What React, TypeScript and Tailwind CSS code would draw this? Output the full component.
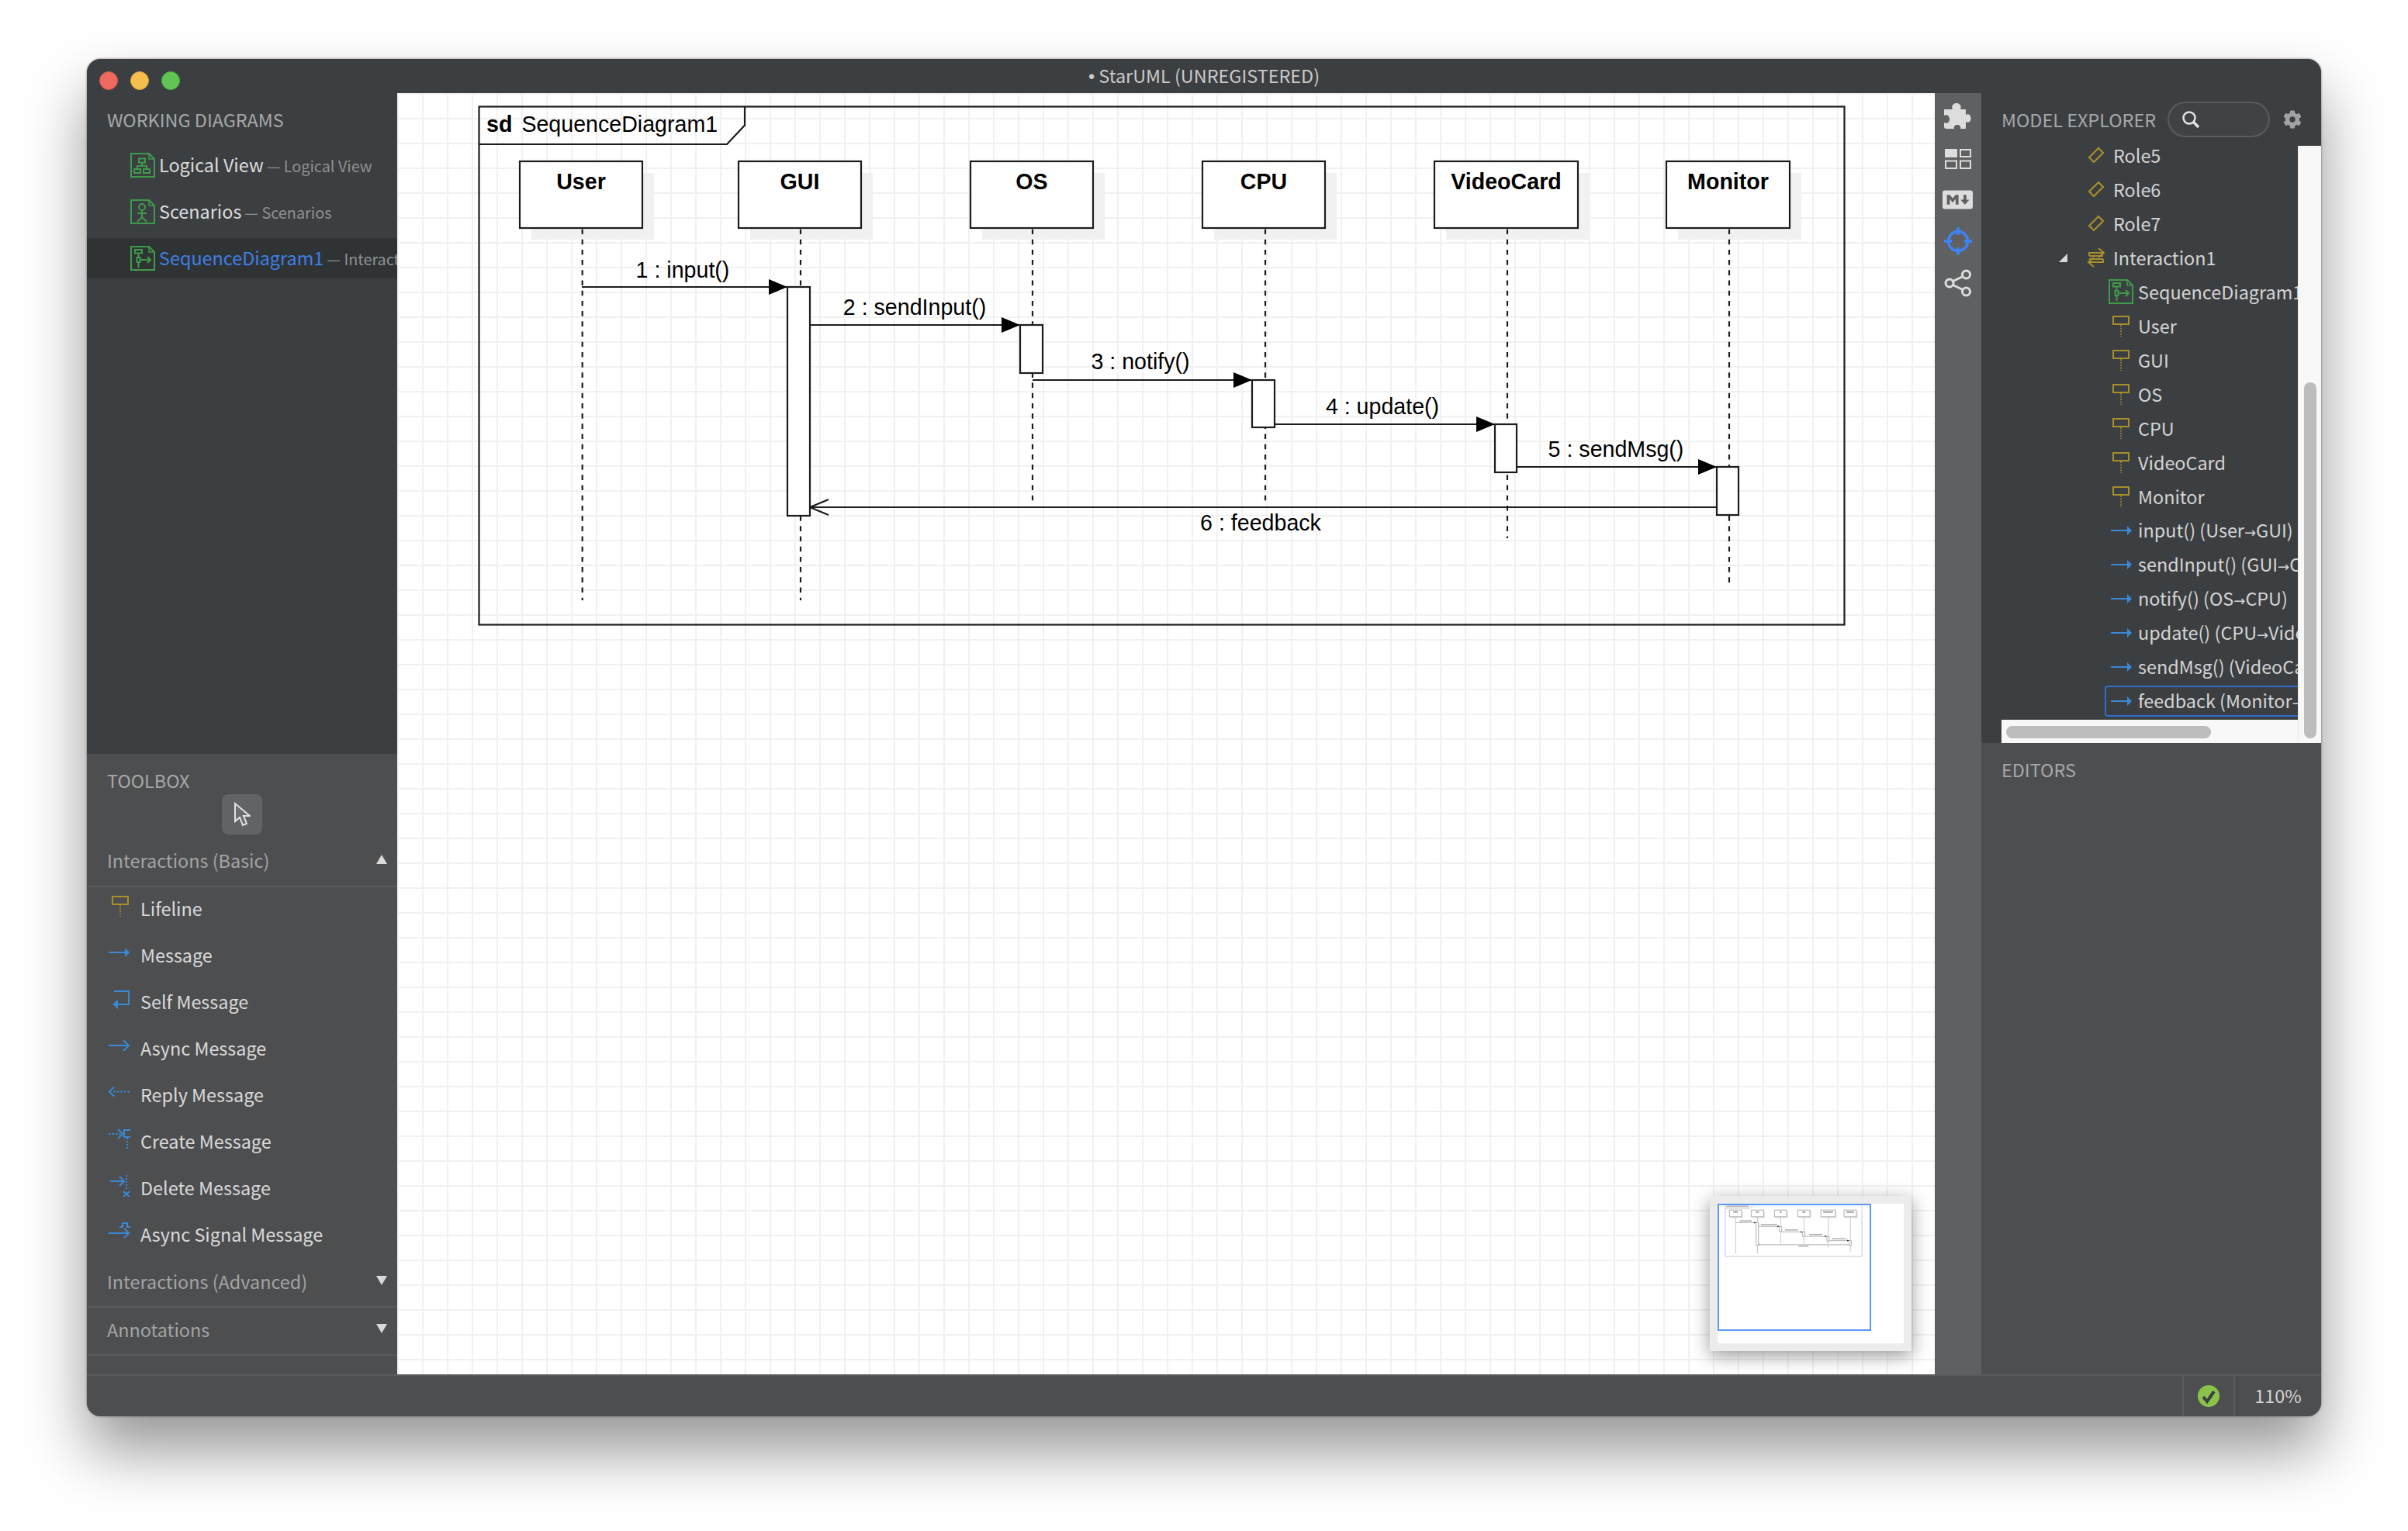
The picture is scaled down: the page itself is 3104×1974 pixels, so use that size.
import { FaCog, FaMarkdown } from 'react-icons/fa';

const GREEN = '#3f9a4c';
const GOLD = '#a78f2b';
const BLUE = '#3b88d4';

// --- small drawings ---------------------------------------------------------

function DiagramIcon({ kind }: { kind: 'logical' | 'scenario' | 'sequence' }) {
  return (
    <svg width="32" height="32" viewBox="0 0 32 32" fill="none" stroke={GREEN} strokeWidth="2" className="shrink-0">
      <path d="M1 1H24L31 8V31H1Z" />
      <path d="M24 1V8H31" strokeWidth="1.5" />
      {kind === 'logical' && (
        <>
          <rect x="11" y="7.5" width="8" height="5" />
          <rect x="5" y="21" width="8" height="5" />
          <rect x="17" y="21" width="8" height="5" />
          <path d="M15 12.5V17M9 21V17H21V21" />
        </>
      )}
      {kind === 'scenario' && (
        <>
          <circle cx="15" cy="10" r="4" />
          <path d="M15 14V23M9 18H21M15 23L9 29M15 23L21 29" />
        </>
      )}
      {kind === 'sequence' && (
        <>
          <rect x="6" y="5" width="9" height="4.5" />
          <rect x="8.5" y="15" width="4" height="6" />
          <path d="M10.5 9.5V15M10.5 21V28M12.5 18H26M22 14L26 18L22 22" />
        </>
      )}
    </svg>
  );
}

function LifelineIcon() {
  return (
    <svg width="22" height="27" viewBox="0 0 22 27" fill="none" stroke={GOLD} className="shrink-0">
      <rect x="1" y="1" width="20" height="10" strokeWidth="2" />
      <path d="M11 12V27" strokeWidth="1.5" strokeDasharray="2 1.5" />
    </svg>
  );
}

function ArrowIcon() {
  return (
    <svg width="27" height="12" viewBox="0 0 27 12" className="shrink-0">
      <path d="M0 6H22" stroke={BLUE} strokeWidth="2" />
      <path d="M21 0L27 6L21 12Z" fill={BLUE} />
    </svg>
  );
}

function ToolIcon({ name }: { name: string }) {
  return (
    <svg width="29" height="30" viewBox="0 0 29 30" fill="none" stroke={BLUE} strokeWidth="2" className="mb-[8px] shrink-0">
      {name === 'Lifeline' && (
        <g stroke={GOLD}>
          <rect x="5" y="2" width="20" height="10" />
          <path d="M15 13V28" strokeWidth="1.5" strokeDasharray="2 1.5" />
        </g>
      )}
      {name === 'Message' && (
        <>
          <path d="M0 14H22" />
          <path d="M21 8L27 14L21 20Z" fill={BLUE} stroke="none" />
        </>
      )}
      {name === 'Self Message' && (
        <>
          <path d="M7 4H26V21H10" />
          <path d="M12 15L5 21L12 27Z" fill={BLUE} stroke="none" />
        </>
      )}
      {name === 'Async Message' && <path d="M0 14H26M19 7L26 14L19 21" />}
      {name === 'Reply Message' && <path d="M27 13.5H5" strokeDasharray="2.5 2" />}
      {name === 'Reply Message' && <path d="M7 7.5L1 13.5L7 19.5" />}
      {name === 'Create Message' && (
        <>
          <path d="M0 8H15" strokeDasharray="2.5 2" />
          <path d="M12 2L18 8L12 14" />
          <path d="M19 3H28M20 3V12H28" />
          <path d="M24 13V28" strokeDasharray="2 2" />
        </>
      )}
      {name === 'Delete Message' && (
        <>
          <path d="M2 9H20M14 3L20 9L14 15" />
          <path d="M23 1V20" strokeDasharray="2 2" />
          <path d="M19 22L27 29M27 22L19 29" />
        </>
      )}
      {name === 'Async Signal Message' && (
        <>
          <path d="M0 16H26M20 10L26 16L20 22" />
          <path d="M14 8H18V3H24V8H28" />
        </>
      )}
    </svg>
  );
}

function Caret({ up }: { up?: boolean }) {
  return (
    <svg width="14" height="12" viewBox="0 0 14 12" className="mb-[6px] shrink-0" fill="#d9d9d9">
      <path d={up ? 'M7 0L14 12H0Z' : 'M0 0H14L7 12Z'} />
    </svg>
  );
}

// --- the sequence diagram, in screen coordinates ----------------------------

const lifelines = [
  { name: 'User', x1: 670, x2: 828, cx: 750.7, end: 774 },
  { name: 'GUI', x1: 952, x2: 1110, cx: 1032, end: 774 },
  { name: 'OS', x1: 1251, x2: 1409, cx: 1331, end: 647 },
  { name: 'CPU', x1: 1550, x2: 1708, cx: 1631, end: 647 },
  { name: 'VideoCard', x1: 1849, x2: 2034, cx: 1943, end: 694 },
  { name: 'Monitor', x1: 2148, x2: 2307, cx: 2229, end: 752 },
];

const activations = [
  { x: 1015, w: 29, y1: 370, y2: 665 },
  { x: 1315, w: 29, y1: 419, y2: 481 },
  { x: 1614, w: 29, y1: 490, y2: 551 },
  { x: 1927, w: 28, y1: 547, y2: 609 },
  { x: 2213, w: 28, y1: 602, y2: 664 },
];

const messages = [
  { label: '1 : input()', from: 750, to: 1015, y: 370, tx: 880, ty: 358 },
  { label: '2 : sendInput()', from: 1044, to: 1315, y: 419, tx: 1179, ty: 406 },
  { label: '3 : notify()', from: 1331, to: 1614, y: 490, tx: 1470, ty: 476 },
  { label: '4 : update()', from: 1643, to: 1927, y: 547, tx: 1782, ty: 534 },
  { label: '5 : sendMsg()', from: 1955, to: 2213, y: 602, tx: 2083, ty: 589 },
];

function Diagram({ mini }: { mini?: boolean }) {
  const ink = mini ? '#bdbdbd' : '#1c1c1c';
  const line = mini ? 8 : 2.2;
  const boxLine = mini ? 12 : 2.2;
  return (
    <svg
      viewBox={mini ? '517 126 2400 1800' : '512 120 1982 1652'}
      className="absolute top-0 left-0 h-full w-full font-['Liberation_Sans','Arial',sans-serif]"
      fill="none"
    >
      <rect x="617.5" y="137.5" width="1760" height="668" stroke={ink} strokeWidth={line} />
      <path d="M617.5 186H937L960 161.5V137.5" stroke={ink} strokeWidth={line} />
      {!mini && (
        <text x="627" y="170" fontSize="28.6" fill="#000" stroke="none">
          <tspan fontWeight="700">sd</tspan>
          <tspan dx="12">SequenceDiagram1</tspan>
        </text>
      )}
      {mini && <rect x="630" y="150" width="290" height="20" fill="#bbb" />}
      {lifelines.map((l) => (
        <g key={l.name}>
          <rect x={l.x1 + 15} y="223" width={l.x2 - l.x1} height="86" fill={mini ? '#ddd' : '#f1f1f1'} />
          <path d={`M${l.cx} 295.5V${l.end}`} stroke={ink} strokeWidth={line} strokeDasharray={mini ? undefined : '6.6 6.6'} />
          <rect x={l.x1} y="208" width={l.x2 - l.x1} height="86" fill="#fff" stroke={ink} strokeWidth={boxLine} />
          {mini ? (
            <rect x={(l.x1 + l.x2) / 2 - l.name.length * 7} y="224" width={l.name.length * 14} height="18" fill="#999" />
          ) : (
            <text x={(l.x1 + l.x2) / 2} y="244" textAnchor="middle" fontSize="28.6" fontWeight="700" fill="#000" stroke="none">
              {l.name}
            </text>
          )}
        </g>
      ))}
      {messages.map((m) => (
        <g key={m.label}>
          <path d={`M${m.from} ${m.y}H${m.to}`} stroke={ink} strokeWidth={boxLine} />
          <path d={`M${m.to - 24} ${m.y - 10}L${m.to} ${m.y}L${m.to - 24} ${m.y + 10}Z`} fill="#000" />
          {mini ? (
            <rect x={m.tx - m.label.length * 7} y={m.ty - 18} width={m.label.length * 14} height="14" fill="#aaa" />
          ) : (
            <text x={m.tx} y={m.ty} textAnchor="middle" fontSize="28.6" fill="#000" stroke="none">
              {m.label}
            </text>
          )}
        </g>
      ))}
      <path d="M2213 654H1044M1068 644L1044 654L1068 664" stroke={ink} strokeWidth={boxLine} />
      {mini ? (
        <rect x="1560" y="666" width="130" height="14" fill="#aaa" />
      ) : (
        <text x="1625" y="684" textAnchor="middle" fontSize="28.6" fill="#000" stroke="none">
          6 : feedback
        </text>
      )}
      {activations.map((a) => (
        <rect key={a.x} x={a.x} y={a.y1} width={a.w} height={a.y2 - a.y1} fill="#fff" stroke={ink} strokeWidth={boxLine} />
      ))}
    </svg>
  );
}

// --- panels -----------------------------------------------------------------

function WorkingDiagrams() {
  const rows = [
    { kind: 'logical' as const, name: 'Logical View', sub: 'Logical View' },
    { kind: 'scenario' as const, name: 'Scenarios', sub: 'Scenarios' },
    { kind: 'sequence' as const, name: 'SequenceDiagram1', sub: 'Interaction1', active: true },
  ];
  return (
    <div className="h-[852px] bg-[#3c3f41] pt-[20px]">
      <div className="pl-[26px] text-[23.4px] leading-[28px] text-[#a6a8a9]">WORKING DIAGRAMS</div>
      <div className="mt-[19px] flex flex-col gap-2">
        {rows.map((r) => (
          <div key={r.name} className={`flex h-[52px] items-center overflow-hidden whitespace-nowrap pl-[56px] ${r.active ? 'bg-[#303334]' : ''}`}>
            <DiagramIcon kind={r.kind} />
            <span className={`mb-[3px] ml-[5px] text-[23.4px] leading-[32px] ${r.active ? 'text-[#3d7fe6]' : 'text-[#dcdcdc]'}`}>{r.name}</span>
            <span className="mt-[1px] ml-[4px] text-[19.8px] leading-[32px] text-[#8f9192]">— {r.sub}</span>
          </div>
        ))}
      </div>
    </div>
  );
}

function SectionHeader({ label, up, className }: { label: string; up?: boolean; className: string }) {
  return (
    <div className={`flex items-center justify-between border-b-2 border-[#5a5b5d] pr-[13px] pl-[26px] ${className}`}>
      <span className="mb-[4px] text-[23.4px] leading-[28px] text-[#a3a4a5]">{label}</span>
      <Caret up={up} />
    </div>
  );
}

function Toolbox() {
  const tools = ['Lifeline', 'Message', 'Self Message', 'Async Message', 'Reply Message', 'Create Message', 'Delete Message', 'Async Signal Message'];
  return (
    <div className="h-[800px] bg-[#4d4e50] pt-[20px]">
      <div className="pl-[26px] text-[23.4px] leading-[28px] text-[#a6a8a9]">TOOLBOX</div>
      <div className="mt-[4px] flex justify-center">
        <div className="flex h-[52px] w-[52px] items-center justify-center rounded-lg bg-[#626365]">
          <svg width="22" height="32" viewBox="0 0 22 32" fill="#6d6e70" stroke="#e2e2e2" strokeWidth="2">
            <path d="M2 2V25L8 20L12 30L17 28L13 18H21Z" />
          </svg>
        </div>
      </div>
      <SectionHeader label="Interactions (Basic)" up className="h-[68px] pt-1" />
      <div className="-mt-px flex flex-col">
        {tools.map((t) => (
          <div key={t} className="flex h-[60px] items-center gap-[12px] pl-[28px]">
            <ToolIcon name={t} />
            <span className="mb-[4px] text-[23.4px] leading-[32px] text-[#d9d9d9]">{t}</span>
          </div>
        ))}
      </div>
      <SectionHeader label="Interactions (Advanced)" className="h-[63px]" />
      <SectionHeader label="Annotations" className="h-[62px]" />
    </div>
  );
}

function TreeLabel({ children }: { children: React.ReactNode }) {
  return <span className="text-[23.4px] leading-[32px] text-[#d4d4d4]">{children}</span>;
}

function Arrow() {
  return <span className="font-['DejaVu_Sans',sans-serif] text-[18px]">→</span>;
}

function ModelExplorer() {
  const lifelineNames = ['User', 'GUI', 'OS', 'CPU', 'VideoCard', 'Monitor'];
  const msgs: [string, string][] = [
    ['input() (User', 'GUI)'],
    ['sendInput() (GUI', 'OS)'],
    ['notify() (OS', 'CPU)'],
    ['update() (CPU', 'VideoCard)'],
    ['sendMsg() (VideoCard', 'Monitor)'],
  ];
  return (
    <div className="flex h-[838px] flex-col bg-[#3c3f41]">
      <div className="flex h-[68px] shrink-0 items-center pl-[26px]">
        <span className="w-[214px] text-[23.4px] leading-[28px] text-[#a6a8a9]">MODEL EXPLORER</span>
        <div className="flex h-[46px] w-[132px] items-center rounded-full border-2 border-[#5a5b5d] bg-[#404345] pl-[16px]">
          <svg width="24" height="24" viewBox="0 0 24 24" fill="none" stroke="#e4e4e4">
            <circle cx="10" cy="10" r="7.5" strokeWidth="2.5" />
            <path d="M15.5 15.5L22 22" strokeWidth="3.5" />
          </svg>
        </div>
        <FaCog className="ml-[17px] text-[24px] text-[#a1a2a3]" />
      </div>
      <div className="flex min-h-0 flex-1">
        <div className="flex w-[408px] flex-col">
          <div className="min-h-0 flex-1 overflow-hidden">
            <div className="-mt-[10px] flex flex-col whitespace-nowrap">
              {['Role5', 'Role6', 'Role7'].map((r) => (
                <div key={r} className="flex h-[44px] items-center gap-[10px] pl-[136px]">
                  <svg width="24" height="24" viewBox="0 0 24 24" fill="none" stroke={GOLD} strokeWidth="2.2">
                    <path d="M15 3L21 9L9 21L3 15Z" />
                  </svg>
                  <TreeLabel>{r}</TreeLabel>
                </div>
              ))}
              <div className="flex h-[44px] items-center pl-[100px]">
                <svg width="11" height="11" viewBox="0 0 11 11" fill="#d9d9d9" className="mr-[25px]">
                  <path d="M11 0V11H0Z" />
                </svg>
                <svg width="24" height="26" viewBox="0 0 24 26" fill="none" stroke={GOLD} strokeWidth="2" className="mr-[10px]">
                  <path d="M3 11V7H21M15 1L22 7L15 13M3 11H21M21 15V19H3M9 13L2 19L9 25M21 15H3" />
                </svg>
                <TreeLabel>Interaction1</TreeLabel>
              </div>
              <div className="flex h-[44px] items-center gap-[6px] pl-[164px]">
                <DiagramIcon kind="sequence" />
                <TreeLabel>SequenceDiagram1</TreeLabel>
              </div>
              {lifelineNames.map((n) => (
                <div key={n} className="flex h-[44px] items-center pl-[164px]">
                  <div className="flex w-[32px] shrink-0 justify-center">
                    <LifelineIcon />
                  </div>
                  <span className="ml-[6px]">
                    <TreeLabel>{n}</TreeLabel>
                  </span>
                </div>
              ))}
              {msgs.map(([a, b]) => (
                <div key={a} className="flex h-[44px] items-center pl-[164px]">
                  <div className="flex w-[32px] shrink-0 justify-center">
                    <ArrowIcon />
                  </div>
                  <span className="mt-[2px] ml-[6px]">
                    <TreeLabel>
                      {a}
                      <Arrow />
                      {b}
                    </TreeLabel>
                  </span>
                </div>
              ))}
              <div className="flex h-[44px] items-center pl-[159px]">
                <div className="flex h-[40px] w-[400px] shrink-0 items-center rounded-l border-2 border-[#2f6ed1] pl-[3px]">
                  <div className="flex w-[32px] shrink-0 justify-center">
                    <ArrowIcon />
                  </div>
                  <span className="mt-[2px] ml-[6px]">
                    <TreeLabel>
                      feedback (Monitor
                      <Arrow />
                      GUI)
                    </TreeLabel>
                  </span>
                </div>
              </div>
            </div>
          </div>
          <div className="ml-[26px] h-[30px] shrink-0 bg-[#f8f8f8] pt-[8px] pl-[6px]">
            <div className="h-[16px] w-[264px] rounded-full bg-[#bdbdbd]" />
          </div>
        </div>
        <div className="w-[30px] border-l border-[#ececec] bg-[#f8f8f8] pt-[305px] pl-[7px]">
          <div className="h-[459px] w-[16px] rounded-full bg-[#bdbdbd]" />
        </div>
      </div>
    </div>
  );
}

function ToolStrip() {
  return (
    <div className="flex w-[60px] shrink-0 flex-col items-center bg-[#5f6062] pt-[2px] pr-[1px] text-[#dddddd]">
      <div className="flex h-[54px] items-center">
        <svg width="35" height="33" viewBox="0 0 35 33" fill="currentColor">
          <path d="M11 8C9 5 11 0 16 0C21 0 23 5 21 8H28V15C31 13 34.5 15 34.5 19.5C34.5 24 31 26 28 24V33H21C22 30 20 28 17 28C14 28 12 30 13 33H3Q0 33 0 30V25C3 27 7 25 7 20.5C7 16 3 14 0 16V8Z" />
        </svg>
      </div>
      <div className="flex h-[54px] items-center pt-1">
        <svg width="34" height="26" viewBox="0 0 34 26" fill="none" stroke="currentColor" strokeWidth="2">
          <rect x="0" y="0" width="16" height="11" fill="currentColor" stroke="none" />
          <rect x="20" y="1" width="13" height="9" />
          <rect x="1" y="15.5" width="14" height="9.5" />
          <rect x="20" y="15.5" width="13" height="9.5" />
        </svg>
      </div>
      <div className="flex h-[54px] items-center">
        <FaMarkdown className="text-[39px]" />
      </div>
      <div className="flex h-[54px] items-center">
        <svg width="36" height="36" viewBox="0 0 36 36" fill="none" stroke="#3f83f8" strokeWidth="3.5">
          <circle cx="18" cy="18" r="12.5" />
          <path d="M18 0V10M18 26V36M0 18H10M26 18H36" />
        </svg>
      </div>
      <div className="flex h-[54px] items-center">
        <svg width="36" height="36" viewBox="0 0 36 36" fill="none" stroke="currentColor" strokeWidth="3">
          <circle cx="28.5" cy="7" r="5" />
          <circle cx="7" cy="18" r="5" />
          <circle cx="28.5" cy="29" r="5" />
          <path d="M11.5 15.5L24 9.5M11.5 20.5L24 26.5" />
        </svg>
      </div>
    </div>
  );
}

function Minimap() {
  return (
    <div className="absolute right-[30px] bottom-[30px] h-[200px] w-[260px] bg-[#ececec] p-[10px] shadow-[0_6px_22px_rgba(0,0,0,0.4)]">
      <div className="relative h-[180px] w-[240px] bg-white">
        <Diagram mini />
        <div className="absolute top-0 left-0 h-[164px] w-[198px] border-2 border-[#5f97f6]" />
      </div>
    </div>
  );
}

export default function App() {
  return (
    <div className="h-[1974px] w-[3104px] overflow-hidden bg-white pt-[76px] pl-[112px] font-['Noto_Sans_CJK_SC','Noto_Sans',sans-serif]">
      <div className="flex h-[1750px] w-[2880px] flex-col overflow-hidden rounded-[18px] bg-[#4d4e50] shadow-[0_44px_80px_rgba(0,0,0,0.42),0_0_3px_rgba(0,0,0,0.5)]">
        <div className="grid h-[44px] shrink-0 grid-cols-3 bg-[#3c3f41]">
          <div className="flex items-center gap-4 pt-[12px] pl-4">
            <span className="h-6 w-6 rounded-full border border-[#d9574c] bg-[#ee6a5f]" />
            <span className="h-6 w-6 rounded-full border border-[#dba63c] bg-[#f5bf4f]" />
            <span className="h-6 w-6 rounded-full border border-[#50ad44] bg-[#61c554]" />
          </div>
          <div className="text-center text-[23.4px] leading-[42px] text-[#c9caca]">
            <span className="font-['Liberation_Sans',sans-serif]">•</span> StarUML (UNREGISTERED)
          </div>
        </div>
        <div className="flex min-h-0 flex-1">
          <div className="w-[400px] shrink-0">
            <WorkingDiagrams />
            <Toolbox />
          </div>
          <div className="relative flex-1 overflow-hidden bg-white bg-[linear-gradient(to_right,#f1f1f1_2px,transparent_2px),linear-gradient(to_bottom,#f1f1f1_2px,transparent_2px)] bg-[size:32px_32px]">
            <Diagram />
            <Minimap />
          </div>
          <ToolStrip />
          <div className="w-[438px] shrink-0">
            <ModelExplorer />
            <div className="pt-[20px] pl-[26px] text-[23.4px] leading-[28px] text-[#a6a8a9]">EDITORS</div>
          </div>
        </div>
        <div className="flex h-[54px] shrink-0 justify-end border-t-2 border-[#5a5b5d] bg-[#4d4e50]">
          <div className="flex w-[66px] items-center justify-center border-l-2 border-[#5a5b5d]">
            <svg width="28" height="28" viewBox="0 0 28 28">
              <circle cx="14" cy="14" r="14" fill="#8bc34a" />
              <path d="M7 15L12 21L21 8" fill="none" stroke="#3c3f41" strokeWidth="4" />
            </svg>
          </div>
          <div className="flex w-[113px] items-center justify-center border-l-2 border-[#5a5b5d] pb-[2px] text-[23.4px] leading-[28px] text-[#d4d4d4]">110%</div>
        </div>
      </div>
    </div>
  );
}
